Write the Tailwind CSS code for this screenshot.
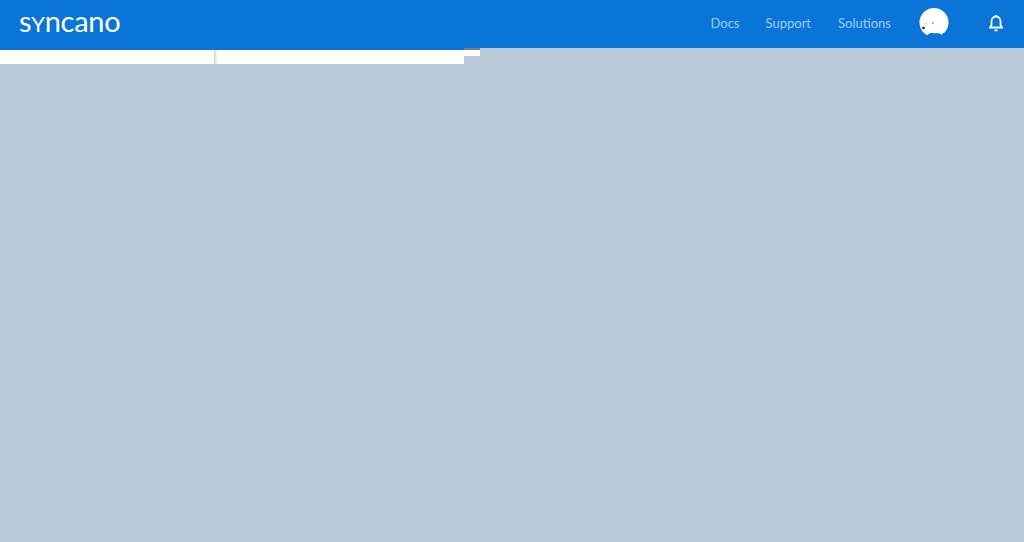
<!doctype html>
<html>
<head>
<meta charset="utf-8">
<script src="https://cdn.jsdelivr.net/npm/@tailwindcss/browser@4"></script>
</head>
<body class="m-0 h-[542px] w-[1024px] overflow-hidden bg-[#bbcbd9] font-['Lato',sans-serif]">
  <header class="flex h-12 items-center justify-between bg-[#0b74d8] pl-[19px] pr-[21px]">
    <span class="mt-[-7px] flex h-[30px] items-baseline text-[29px] leading-[30px] tracking-[-0.3px] text-white">s<span class="text-[22px] uppercase">y</span>ncano</span>
    <nav class="mt-[-2px] flex items-center text-[13px] text-[#9fcdf7]">
      <a class="mr-[26px] mt-0.5">Docs</a>
      <a class="mr-[27px] mt-0.5">Support</a>
      <a class="mr-7 mt-0.5">Solutions</a>
      <svg class="mr-10 h-[30px] w-[30px]" viewBox="0 0 30 30"><circle cx="15" cy="14.5" r="14.500" fill="#fff"/><path d="M7 29.500q2.500-5 6-4.500 5 .5 7 .2l2 1q1 2 0 3.300zM25 25q-2 0-2.500 3l4-2z" fill="#0b74d8"/><circle cx="4.500" cy="20" r="1.300" fill="#222"/><circle cx="14" cy="15" r="0.800" fill="#556"/><circle cx="7" cy="15" r="0.600" fill="#889"/></svg>
      <svg class="h-[18px] w-[14px]" viewBox="0 0 14 18" fill="none" stroke="#fff" stroke-width="1.800"><path d="M1 13.500h12l-1.500-2.500V7a4.500 4.500 0 0 0-9 0v4zM7 1v1.500M5.500 16.300h3"/></svg>
    </nav>
  </header>
  <div class="flex h-4 items-start">
    <div class="h-4 w-[464px]">
      <div class="h-0.5 bg-[#0b74d8]"></div>
      <div class="flex h-[14px]">
        <div class="w-[214px] bg-white"></div>
        <div class="w-[4px] bg-gradient-to-r from-[#d4d4d4] to-white"></div>
        <div class="flex-1 bg-white"></div>
      </div>
    </div>
    <div class="w-4"><div class="h-0.5 bg-[#6f7f8d]"></div><div class="h-1.5 bg-white"></div></div>
  </div>
</body>
</html>
